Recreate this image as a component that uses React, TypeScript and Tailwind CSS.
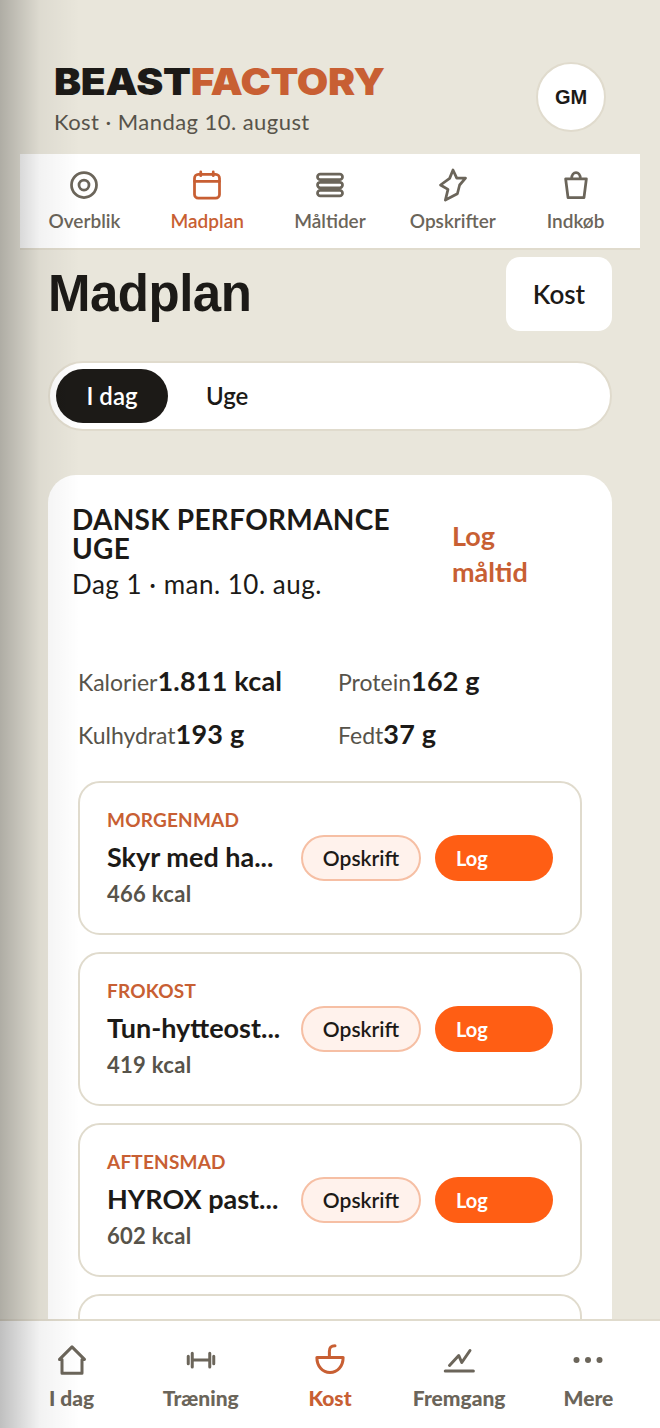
const body = "font-['Lato','Noto_Sans',sans-serif]";
const heading = "font-['Liberation_Sans',Arial,sans-serif]";

const topNav = [
  { label: 'Overblik', icon: <><circle cx="12" cy="12" r="10" /><circle cx="12" cy="12" r="4" /></> },
  { label: 'Madplan', active: true, icon: <><rect x="2" y="3.500" width="20" height="19" rx="3" /><path d="M2 9h20M7 1.500v3M17 1.500v3" /></> },
  { label: 'Måltider', icon: <><rect x="2" y="3.300" width="20" height="4.400" rx="2.200" /><rect x="2" y="9.800" width="20" height="4.400" rx="2.200" /><rect x="2" y="16.300" width="20" height="4.400" rx="2.200" /></> },
  { label: 'Opskrifter', icon: <path d="M12 0l3 6.500h7L17.300 12l-1.800 7-9.600 5L8 15.500 2 12l7.300-5.300z" /> },
  { label: 'Indkøb', icon: <path d="M3.700 7h16.600L18.400 22H5.600zM8.500 7c0-6.500 7-6.500 7 0" /> },
];

const bottomNav = [
  { label: 'I dag', icon: <path d="M12 1.500l10 10h-2v11H4v-11H2z" /> },
  { label: 'Træning', icon: <path d="M1.800 9v6M5 6.500v11M19 6.500v11M22.200 9v6M5 12h14" /> },
  { label: 'Kost', active: true, icon: <path d="M1.500 10h21c0 7-4.500 12-10.500 12S1.500 17 1.500 10zM11.500 10V5c0-3 1.500-4.500 4.500-4.500" /> },
  { label: 'Fremgang', icon: <path d="M1 20.800h22.500M4.400 16.400l7.400-8 2.400 5.600 6.600-9.600" /> },
  { label: 'Mere', icon: <g fill="currentColor" stroke="none"><circle cx="2.800" cy="12" r="2.400" /><circle cx="12" cy="12" r="2.400" /><circle cx="21.200" cy="12" r="2.400" /></g> },
];

const meals = [
  { type: 'MORGENMAD', name: 'Skyr med ha...', kcal: '466 kcal' },
  { type: 'FROKOST', name: 'Tun-hytteost...', kcal: '419 kcal' },
  { type: 'AFTENSMAD', name: 'HYROX past...', kcal: '602 kcal' },
];

const stats = [
  ['Kalorier', '1.811 kcal'],
  ['Protein', '162 g'],
  ['Kulhydrat', '193 g'],
  ['Fedt', '37 g'],
];

export default function App() {
  return (
    <div className={`relative w-[660px] h-[1428px] overflow-hidden bg-[#e9e6db] text-[#1c1a17] ${body}`}>
      <header className="flex items-start justify-between px-[54px] pt-[62px] h-[154px]">
        <div>
          {/* logo face is wider than Inter, so stretch it */}
          <div className="origin-left scale-x-[1.1] font-['Inter',sans-serif] text-[37px] leading-[38px] font-black tracking-[-0.3px] mt-[1px] whitespace-nowrap">
            BEAST<span className="text-[#c85f33]">FACTORY</span>
          </div>
          <div className="mt-[6px] text-[22px] leading-[30px] tracking-[0.45px] text-[#57534a]">Kost · Mandag 10. august</div>
        </div>
        <div className={`${heading} flex h-[70px] w-[70px] items-center justify-center rounded-full border-2 border-[#e0dbcd] bg-white text-[20px] font-bold`}>GM</div>
      </header>

      <nav className="mx-[20px] flex h-[96px] border-b-2 border-[#e0dbcd] bg-white px-[3px]">
        {topNav.map((item) => (
          <div key={item.label} className={`flex flex-1 flex-col items-center pt-[16px] ${item.active ? 'text-[#c85f33]' : 'text-[#6b655a]'}`}>
            <svg width="30" height="30" viewBox="0 0 24 24" fill="none" stroke="currentColor" strokeWidth="2.200" strokeLinecap="round" strokeLinejoin="round" className="overflow-visible">{item.icon}</svg>
            <span className="mt-[9px] text-[19px] leading-[24px] font-semibold">{item.label}</span>
          </div>
        ))}
      </nav>

      <main className="px-[48px] pt-[7px]">
        <div className="flex items-center justify-between h-[74px]">
          <h1 className={`${heading} text-[51px] leading-[56px] font-bold tracking-[-0.5px]`}>Madplan</h1>
          <div className="flex h-[74px] w-[106px] items-center justify-center rounded-[14px] bg-white text-[26px] font-semibold">Kost</div>
        </div>

        <div className="mt-[30px] flex h-[70px] items-center rounded-full border-2 border-[#e0dbcd] bg-white px-[6px] text-[24px] font-semibold">
          <div className="flex h-[54px] w-[112px] items-center justify-center rounded-full bg-[#1c1a17] text-white">I dag</div>
          <div className="ml-[38px]">Uge</div>
        </div>

        <section className="mt-[44px] rounded-t-[28px] bg-white h-[900px] pt-[30px]">
          <div className="flex items-start pl-[24px]">
            <div className="w-[380px] pr-[40px]">
              <div className="text-[28px] leading-[29px] font-bold tracking-[0.3px]">DANSK PERFORMANCE UGE</div>
              <div className="mt-[5px] text-[26px] leading-[32px] tracking-[0.5px]">Dag 1 · man. 10. aug.</div>
            </div>
            <div className="mt-[13px] w-[100px] text-[27px] leading-[36px] font-bold text-[#c85f33]">Log måltid</div>
          </div>

          <div className="mt-[61px] grid grid-cols-[260px_1fr] gap-y-[17px] pl-[30px]">
            {stats.map(([label, value]) => (
              <div key={label} className="flex items-baseline h-[36px]">
                <span className="text-[23px] text-[#57534a]">{label}</span>
                <span className="text-[27px] font-bold tracking-[0.2px]">{value}</span>
              </div>
            ))}
          </div>

          <div className="mt-[31px] flex flex-col gap-[17px] px-[30px]">
            {meals.map((meal) => (
              <div key={meal.type} className="flex h-[154px] items-center rounded-[22px] border-2 border-[#e0dbcd] px-[27px]">
                <div className="w-[176px] shrink-0 whitespace-nowrap">
                  <div className="text-[19px] leading-[24px] font-bold tracking-[0.2px] text-[#c85f33]">{meal.type}</div>
                  <div className="mt-[7px] text-[27px] leading-[36px] font-bold">{meal.name}</div>
                  <div className="mt-[5px] text-[22px] leading-[28px] font-bold tracking-[0.3px] text-[#57534a]">{meal.kcal}</div>
                </div>
                <div className="ml-[18px] flex gap-[14px]">
                  <div className="flex h-[46px] w-[120px] items-center justify-center rounded-full border-2 border-[#f6bfa4] bg-[#fff2ec] text-[21px] font-semibold">Opskrift</div>
                  <div className="flex h-[46px] w-[118px] items-center rounded-full bg-[#ff5e14] pl-[21px] text-[20px] font-bold text-white">Log</div>
                </div>
              </div>
            ))}
            <div className="h-[154px] rounded-[22px] border-2 border-[#e0dbcd]" />
          </div>
        </section>
      </main>

      <nav className="absolute inset-x-0 bottom-0 flex h-[109px] border-t-2 border-[#e0dbcd] bg-white px-[7px]">
        {bottomNav.map((item) => (
          <div key={item.label} className={`flex flex-1 flex-col items-center pt-[24px] ${item.active ? 'text-[#c85f33]' : 'text-[#6b655a]'}`}>
            <svg width="30" height="30" viewBox="0 0 24 24" fill="none" stroke="currentColor" strokeWidth="2.400" strokeLinecap="round" strokeLinejoin="round" className="overflow-visible">{item.icon}</svg>
            <span className="mt-[10px] text-[21px] leading-[26px] font-black">{item.label}</span>
          </div>
        ))}
      </nav>

      <div className="pointer-events-none absolute inset-y-0 left-0 w-[80px] bg-gradient-to-r from-black/25 via-black/5 to-transparent" />
    </div>
  );
}
